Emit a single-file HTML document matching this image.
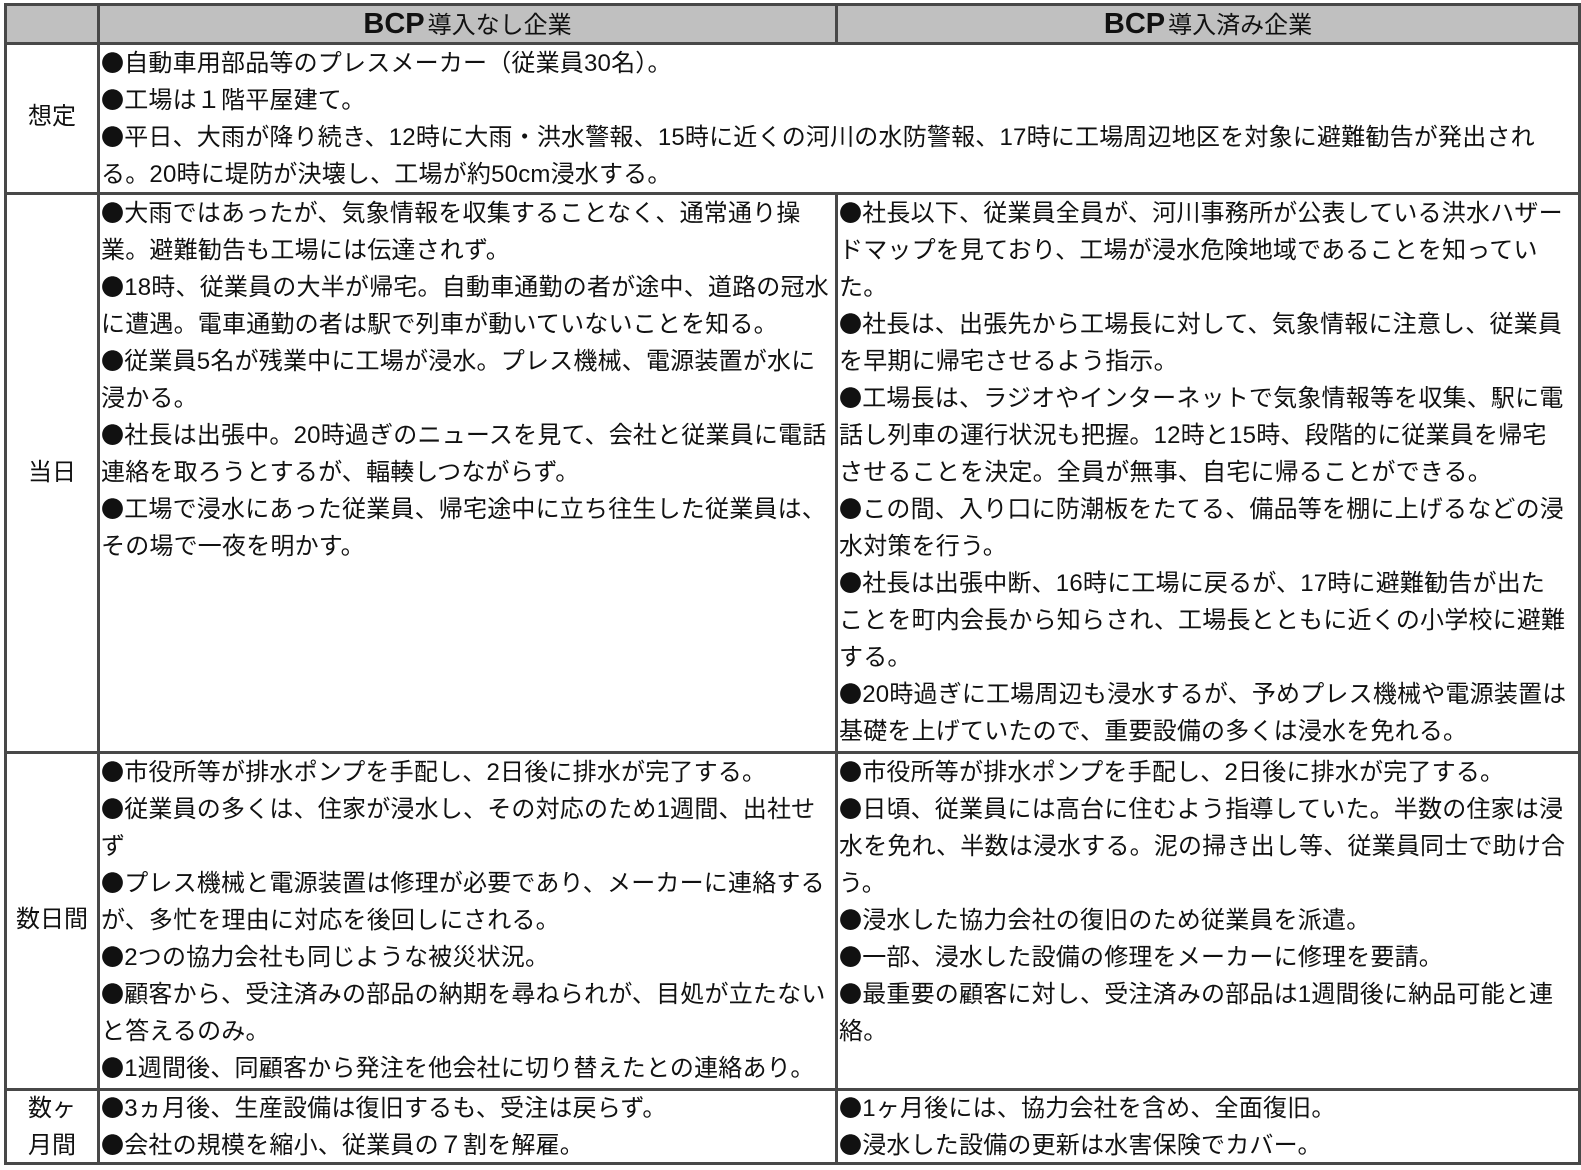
<!DOCTYPE html>
<html><head><meta charset="utf-8"><style>
body{margin:0;width:1581px;height:1170px;background:#fff;position:relative;overflow:hidden;font-family:"Liberation Sans","Noto Sans CJK JP",sans-serif;color:#111}
.h{position:absolute;background:#484848;height:3px}
.v{position:absolute;background:#484848;width:3px}
.hd{position:absolute;background:#c0c0c0}
.c{position:absolute;font-size:24px;line-height:37px;letter-spacing:0.2px;white-space:nowrap}
.c i{font-style:normal;font-family:"Noto Sans CJK JP",sans-serif;font-size:23px;line-height:0}
.lab{position:absolute;font-size:24px;line-height:37px;text-align:center;width:94px;left:5px}
.th{position:absolute;top:5px;height:38px;line-height:38px;text-align:center;font-size:24px}
.th b{font-size:29px;margin-right:3px}
</style></head><body>
<div class="hd" style="left:5px;top:5px;width:1574px;height:38px"></div>
<div class="h" style="left:4px;top:3px;width:1577px"></div>
<div class="h" style="left:4px;top:42px;width:1577px"></div>
<div class="h" style="left:4px;top:192px;width:1577px"></div>
<div class="h" style="left:4px;top:751px;width:1577px"></div>
<div class="h" style="left:4px;top:1088px;width:1577px"></div>
<div class="h" style="left:4px;top:1162px;width:1577px"></div>
<div class="v" style="left:4px;top:3px;height:1162px"></div>
<div class="v" style="left:97px;top:3px;height:1162px"></div>
<div class="v" style="left:835px;top:3px;height:42px"></div>
<div class="v" style="left:835px;top:192px;height:973px"></div>
<div class="v" style="left:1578px;top:3px;height:1162px"></div>
<div class="th" style="left:100px;width:735px"><b>BCP</b>導入なし企業</div>
<div class="th" style="left:838px;width:740px"><b>BCP</b>導入済み企業</div>
<div class="lab" style="top:98px">想定</div>
<div class="lab" style="top:454px">当日</div>
<div class="lab" style="top:901px">数日間</div>
<div class="lab" style="top:1090px">数ヶ<br>月間</div>
<div class="c" style="left:101px;top:45px"><i>●</i>自動車用部品等のプレスメーカー（従業員30名）。<br><i>●</i>工場は１階平屋建て。<br><i>●</i>平日、大雨が降り続き、12時に大雨・洪水警報、15時に近くの河川の水防警報、17時に工場周辺地区を対象に避難勧告が発出され<br>る。20時に堤防が決壊し、工場が約50cm浸水する。</div>
<div class="c" style="left:101px;top:195px"><i>●</i>大雨ではあったが、気象情報を収集することなく、通常通り操<br>業。避難勧告も工場には伝達されず。<br><i>●</i>18時、従業員の大半が帰宅。自動車通勤の者が途中、道路の冠水<br>に遭遇。電車通勤の者は駅で列車が動いていないことを知る。<br><i>●</i>従業員5名が残業中に工場が浸水。プレス機械、電源装置が水に<br>浸かる。<br><i>●</i>社長は出張中。20時過ぎのニュースを見て、会社と従業員に電話<br>連絡を取ろうとするが、輻輳しつながらず。<br><i>●</i>工場で浸水にあった従業員、帰宅途中に立ち往生した従業員は、<br>その場で一夜を明かす。</div>
<div class="c" style="left:839px;top:195px"><i>●</i>社長以下、従業員全員が、河川事務所が公表している洪水ハザー<br>ドマップを見ており、工場が浸水危険地域であることを知ってい<br>た。<br><i>●</i>社長は、出張先から工場長に対して、気象情報に注意し、従業員<br>を早期に帰宅させるよう指示。<br><i>●</i>工場長は、ラジオやインターネットで気象情報等を収集、駅に電<br>話し列車の運行状況も把握。12時と15時、段階的に従業員を帰宅<br>させることを決定。全員が無事、自宅に帰ることができる。<br><i>●</i>この間、入り口に防潮板をたてる、備品等を棚に上げるなどの浸<br>水対策を行う。<br><i>●</i>社長は出張中断、16時に工場に戻るが、17時に避難勧告が出た<br>ことを町内会長から知らされ、工場長とともに近くの小学校に避難<br>する。<br><i>●</i>20時過ぎに工場周辺も浸水するが、予めプレス機械や電源装置は<br>基礎を上げていたので、重要設備の多くは浸水を免れる。</div>
<div class="c" style="left:101px;top:754px"><i>●</i>市役所等が排水ポンプを手配し、2日後に排水が完了する。<br><i>●</i>従業員の多くは、住家が浸水し、その対応のため1週間、出社せ<br>ず<br><i>●</i>プレス機械と電源装置は修理が必要であり、メーカーに連絡する<br>が、多忙を理由に対応を後回しにされる。<br><i>●</i>2つの協力会社も同じような被災状況。<br><i>●</i>顧客から、受注済みの部品の納期を尋ねられが、目処が立たない<br>と答えるのみ。<br><i>●</i>1週間後、同顧客から発注を他会社に切り替えたとの連絡あり。</div>
<div class="c" style="left:839px;top:754px"><i>●</i>市役所等が排水ポンプを手配し、2日後に排水が完了する。<br><i>●</i>日頃、従業員には高台に住むよう指導していた。半数の住家は浸<br>水を免れ、半数は浸水する。泥の掃き出し等、従業員同士で助け合<br>う。<br><i>●</i>浸水した協力会社の復旧のため従業員を派遣。<br><i>●</i>一部、浸水した設備の修理をメーカーに修理を要請。<br><i>●</i>最重要の顧客に対し、受注済みの部品は1週間後に納品可能と連<br>絡。</div>
<div class="c" style="left:101px;top:1090px"><i>●</i>3ヵ月後、生産設備は復旧するも、受注は戻らず。<br><i>●</i>会社の規模を縮小、従業員の７割を解雇。</div>
<div class="c" style="left:839px;top:1090px"><i>●</i>1ヶ月後には、協力会社を含め、全面復旧。<br><i>●</i>浸水した設備の更新は水害保険でカバー。</div>
</body></html>
